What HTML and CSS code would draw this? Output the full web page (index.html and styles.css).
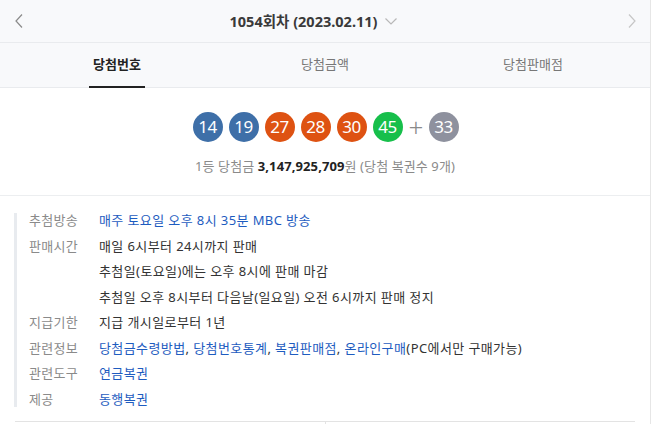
FILE: index.html
```html
<!DOCTYPE html>
<html lang="ko">
<head>
    <meta charset="UTF-8">
    <title>1054회차 당첨번호</title>
    <link rel="stylesheet" href="styles.css">
</head>
<body>
    <div class="wrap">
        <div class="header">
            <a class="nav prev" href="#">
                <svg width="8" height="14" viewBox="0 0 8 14"><path d="M7 0.5L1 7l6 6.5" fill="none" stroke="#8a8a8a" stroke-width="1.2"/></svg>
            </a>
            <div class="title">
                <span>1054회차 (2023.02.11)</span>
                <svg class="caret" width="12" height="7" viewBox="0 0 12 7"><path d="M0.5 0.5L6 6l5.5-5.5" fill="none" stroke="#b8b8b8" stroke-width="1.2"/></svg>
            </div>
            <a class="nav next" href="#">
                <svg width="8" height="14" viewBox="0 0 8 14"><path d="M1 0.5L7 7l-6 6.5" fill="none" stroke="#c6c6c6" stroke-width="1.2"/></svg>
            </a>
        </div>

        <div class="tabs">
            <div class="tab active"><span>당첨번호</span></div>
            <div class="tab"><span>당첨금액</span></div>
            <div class="tab"><span>당첨판매점</span></div>
        </div>

        <div class="draw">
            <div class="balls">
                <span class="ball blue">14</span>
                <span class="ball blue">19</span>
                <span class="ball red">27</span>
                <span class="ball red">28</span>
                <span class="ball red">30</span>
                <span class="ball green">45</span>
                <span class="plus">+</span>
                <span class="ball gray">33</span>
            </div>
            <p class="prize">1등 당첨금 <strong>3,147,925,709</strong>원 (당첨 복권수 9개)</p>
        </div>

        <dl class="info">
            <dt>추첨방송</dt>
            <dd><a href="#">매주 토요일 오후 8시 35분 MBC 방송</a></dd>
            <dt>판매시간</dt>
            <dd>매일 6시부터 24시까지 판매</dd>
            <dt></dt>
            <dd>추첨일(토요일)에는 오후 8시에 판매 마감</dd>
            <dt></dt>
            <dd>추첨일 오후 8시부터 다음날(일요일) 오전 6시까지 판매 정지</dd>
            <dt>지급기한</dt>
            <dd>지급 개시일로부터 1년</dd>
            <dt>관련정보</dt>
            <dd><a href="#">당첨금수령방법</a>, <a href="#">당첨번호통계</a>, <a href="#">복권판매점</a>, <a href="#">온라인구매</a>(PC에서만 구매가능)</dd>
            <dt>관련도구</dt>
            <dd><a href="#">연금복권</a></dd>
            <dt>제공</dt>
            <dd><a href="#">동행복권</a></dd>
        </dl>

        <div class="more">
            <div class="more-cell"></div>
            <div class="more-cell"></div>
        </div>
    </div>
</body>
</html>
```

FILE: styles.css
```css
body {
    margin: 0;
    font-family: "Noto Sans", "Noto Sans CJK KR", sans-serif;
    color: #333;
    background: #fff;
    overflow: hidden;
}
a {
    text-decoration: none;
}
.wrap {
    width: 650px;
    height: 424px;
    border-right: 1px solid #e6e6e6;
    overflow: hidden;
}

/* header */
.header {
    height: 42px;
    padding: 0 14px 0 15px;
    display: flex;
    align-items: center;
    background: #f8f9fb;
    border-bottom: 1px solid #e9ebee;
}
.nav {
    display: flex;
    width: 8px;
    margin-top: -1px;
}
.title {
    flex: 1;
    display: flex;
    align-items: center;
    justify-content: center;
    gap: 8px;
    padding-right: 24px;
    font-size: 14.5px;
    font-weight: bold;
    color: #3a3a3a;
    line-height: 20px;
}
.caret {
    margin-top: 1px;
}

/* tabs */
.tabs {
    height: 45px;
    padding: 0 13px;
    display: flex;
    background: #f8f9fb;
    box-shadow: inset 0 -1px 0 #e9ebee;
}
.tab {
    flex: 1;
    text-align: center;
    font-size: 13px;
    color: #777;
}
.tab span {
    display: inline-block;
    height: 43px;
    line-height: 43px;
    padding: 0 4px;
}
.tab.active span {
    color: #222;
    font-weight: bold;
    border-bottom: 2px solid #222;
}

/* winning numbers */
.draw {
    padding: 24px 0 20px;
    border-bottom: 1px solid #eceef0;
    text-align: center;
}
.balls {
    display: flex;
    justify-content: center;
    align-items: center;
    gap: 6px;
    padding-left: 1px;
}
.ball {
    width: 30px;
    height: 30px;
    border-radius: 50%;
    color: #fff;
    font-size: 17px;
    line-height: 30px;
    text-align: center;
    letter-spacing: -0.5px;
}
.ball.blue { background: #3e6fa8; }
.ball.red { background: #de5212; }
.ball.green { background: #17bf4b; }
.ball.gray { background: #8e919e; }
.plus {
    width: 14px;
    font-size: 26px;
    line-height: 30px;
    color: #8a8a8a;
    font-weight: 300;
}
.prize {
    margin: 15px 0 0;
    font-size: 13px;
    line-height: 18px;
    color: #8a8a8a;
    letter-spacing: 0.1px;
}
.prize strong {
    color: #222;
}

/* info list */
.info {
    margin: 17px 0 0 14px;
    padding-left: 12px;
    border-left: 3px solid #e8ebef;
    display: grid;
    grid-template-columns: 70px auto;
    row-gap: 10.5px;
    font-size: 13px;
    line-height: 15px;
}
.info dt {
    color: #8a8a8a;
    letter-spacing: 0.3px;
}
.info dd {
    margin: 0;
    color: #333;
    white-space: nowrap;
    letter-spacing: 0.4px;
}
.info a {
    color: #1e5cc0;
}

/* bottom buttons (cut off) */
.more {
    margin: 14px 15px 0;
    height: 30px;
    display: flex;
    border-top: 1px solid #e3e3e3;
}
.more-cell {
    flex: 1;
}
.more-cell + .more-cell {
    border-left: 1px solid #e3e3e3;
}
```
